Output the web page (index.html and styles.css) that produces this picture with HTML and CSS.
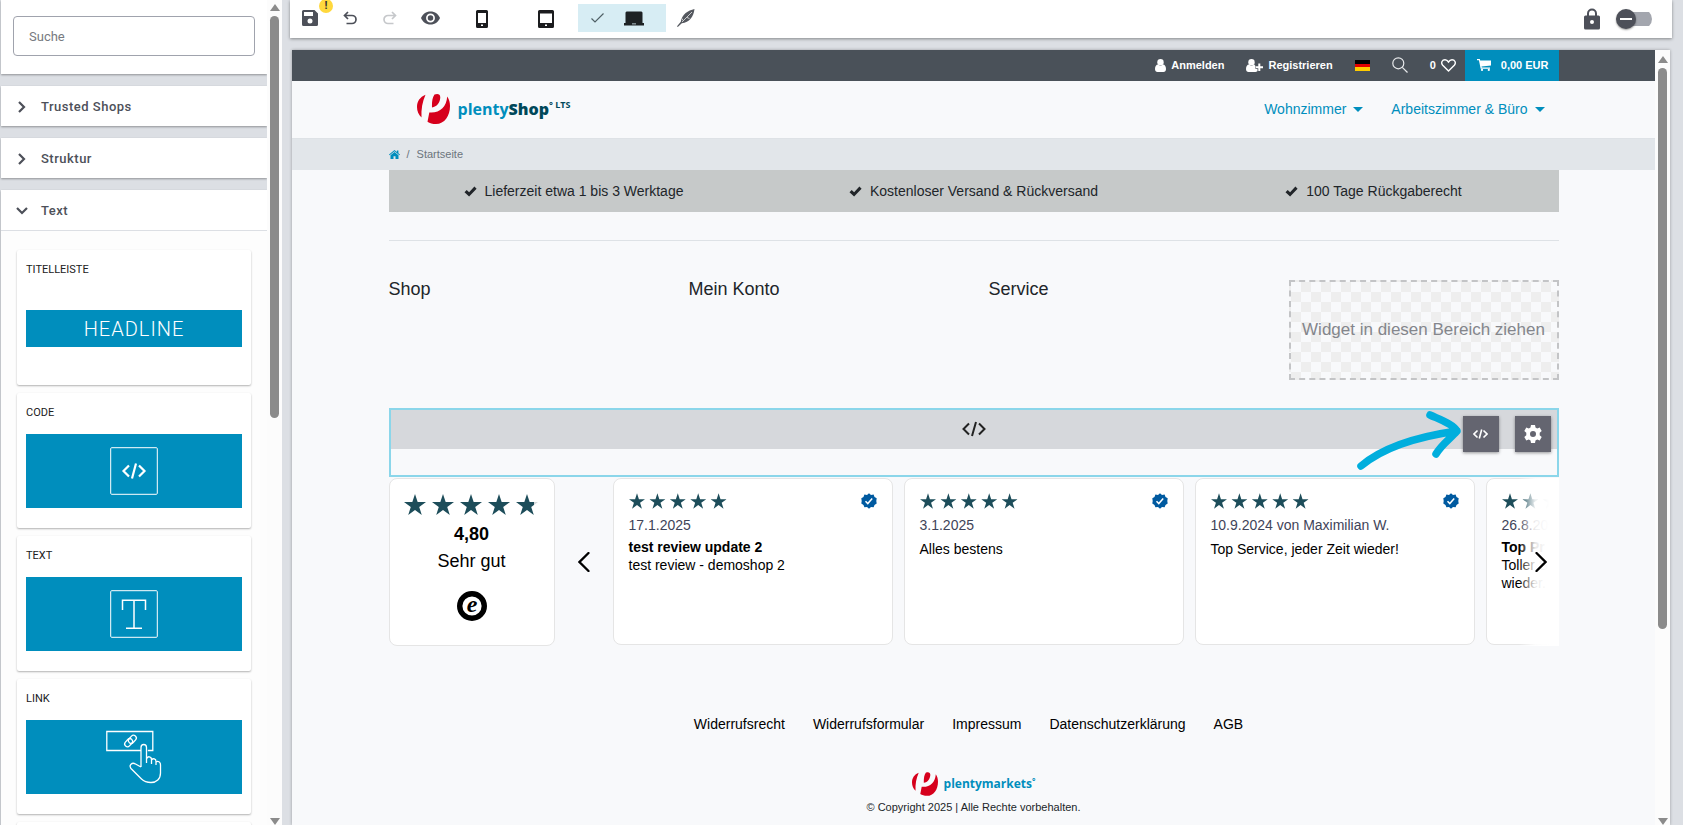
FILE: index.html
```html
<!DOCTYPE html>
<html lang="de">
<head>
<meta charset="utf-8">
<title>plentyShop LTS – ShopBuilder</title>
<link rel="stylesheet" href="styles.css">
</head>
<body>
<svg class="sprite" aria-hidden="true">
  <symbol id="star" viewBox="0 0 24 23"><path d="M12 0l2.900 8.700H24l-7.400 5.400 2.800 8.900-7.400-5.500L4.600 23l2.800-8.900L0 8.700h9.100z"/></symbol>
  <symbol id="tick" viewBox="0 0 13 11"><path fill="#212529" d="M.5 6.200L2.700 4l2.400 2.300L10.400.6l2.200 2.100-7.500 7.900z"/></symbol>
  <symbol id="code" viewBox="0 0 24 16"><path d="M7 2.500L1.500 8 7 13.500M17 2.500L22.500 8 17 13.500M14 1l-4 14" fill="none" stroke="currentColor" stroke-width="2"/></symbol>
  <symbol id="code-small" viewBox="0 0 15 10"><path d="M4.500 1.500L1 5l3.500 3.500M10.500 1.500L14 5l-3.500 3.500M8.700.5l-2.400 9" fill="none" stroke="currentColor" stroke-width="1.600"/></symbol>
  <symbol id="verified" viewBox="0 0 16 16"><path fill="#005aa0" d="M8 .3l2 1.600 2.600-.4.900 2.400 2.200 1.300-.4 2.700.4 2.700-2.200 1.300-.9 2.400-2.600-.3L8 15.700 6 14l-2.600.3-.9-2.400L.3 10.600.7 8 .3 5.200l2.200-1.300.9-2.400 2.600.4z"/><path d="M4.500 8.200l2.300 2.400 4.400-5" fill="none" stroke="#fff" stroke-width="1.500"/></symbol>
  <symbol id="mark" viewBox="0 0 33 30"><g fill="#d6001c"><path d="M8.500.8C3 3 0 7.500 0 13c0 4 1.500 7.500 4.500 10.500C4 15.500 5.500 7.500 8.500.8z"/><path d="M17.500.6c3.500-1.400 6.200-.2 5.700 3.600-.5 4.600-3.200 8.400-8.200 9.300-.2-5 .3-9.900 2.500-12.900z"/><path d="M30.200 2.500C32.200 5.300 33 8.500 33 12c0 10-5.500 18-14 18-3.300 0-6.300-.8-8.500-2.300L12.300 18.500c10.200 1 17.200-5.500 17.900-16z"/></g></symbol>
  <symbol id="right" viewBox="0 0 10 14"><path d="M2 2l5 5-5 5" fill="none" stroke="currentColor" stroke-width="2.200"/></symbol>
</svg>

<div class="app">
  <aside class="sidebar">
    <div class="sidebar-content">
      <div class="panel search-panel"><input class="search" type="text" placeholder="Suche" aria-label="Suche"></div>
      <button class="panel group"><svg class="chev"><use href="#right"/></svg>Trusted Shops</button>
      <button class="panel group"><svg class="chev"><use href="#right"/></svg>Struktur</button>
      <section class="panel open">
        <button class="group"><svg class="chev down"><use href="#right"/></svg>Text</button>
        <div class="widgets">
          <article class="widget"><h3>TITELLEISTE</h3><div class="thumb short">HEADLINE</div></article>
          <article class="widget"><h3>CODE</h3><div class="thumb">
            <svg width="48" height="48" viewBox="0 0 48 48" fill="none" stroke="#fff"><rect x=".7" y=".7" width="46.600" height="46.600" rx="1"/><path stroke-width="2.200" d="M19 18.500L13.500 24l5.500 5.500M29 18.500l5.500 5.500-5.500 5.500M26 16.500l-4 15"/></svg></div></article>
          <article class="widget"><h3>TEXT</h3><div class="thumb">
            <svg width="48" height="48" viewBox="0 0 48 48" fill="none" stroke="#fff"><rect x=".7" y=".7" width="46.600" height="46.600" rx="1"/><path stroke-width="1.500" d="M12.500 20V10.200h23V20M24 10v28M16 38.200h16"/></svg></div></article>
          <article class="widget"><h3>LINK</h3><div class="thumb">
            <svg width="56" height="54" viewBox="0 0 56 54" fill="none" stroke="#fff" stroke-width="1.300"><path d="M35 20.500H.8V1.500h46v19h-5"/><g transform="rotate(-48 24.500 11)"><rect x="17.500" y="8" width="9" height="5.500" rx="2.700"/><rect x="22.500" y="8.500" width="9" height="5.500" rx="2.700"/></g><path d="M35 37V17.500c0-4 5.500-4 5.500 0V33M40.500 29c1-3.500 5-2.500 5 .5V34M45.500 30c1.500-2 4.500-1.500 4.500 1.500V35M50 32c2-1.500 4.500 0 4.500 3v8c0 6-4 9.500-9.500 9.500-4 0-7-1-9.500-3.500L25 38.500c-2.500-3.500 1-6.500 4.500-4.500L35 37"/></svg></div></article>
          <article class="widget"></article>
        </div>
      </section>
    </div>
    <div class="scrollbar" aria-hidden="true"><i class="up"></i><b class="bar-left"></b><i class="dn"></i></div>
  </aside>

  <main class="main">
    <div class="toolbar">
      <button class="tool" aria-label="Speichern">
        <svg width="16" height="16" viewBox="0 0 16 16"><path fill-rule="evenodd" fill="#4d5059" d="M1.500 0H12.500L16 3.500v11a1.500 1.500 0 0 1-1.500 1.500h-13A1.500 1.500 0 0 1 0 14.500v-13A1.500 1.500 0 0 1 1.500 0zM2 2v4h9V2zM8 8.500a2.500 2.500 0 1 0 0 5 2.500 2.500 0 0 0 0-5z"/></svg>
        <span class="alert">!</span></button>
      <button class="tool" aria-label="Rückgängig"><svg width="14" height="14" viewBox="0 0 14 14" fill="none" stroke="#4d5059" stroke-width="1.700"><path d="M5 1L1.500 4.500 5 8M1.500 4.500H9a4 4 0 0 1 0 8H3.500"/></svg></button>
      <button class="tool" aria-label="Wiederholen"><svg width="14" height="14" viewBox="0 0 14 14" fill="none" stroke="#c6c8cb" stroke-width="1.700"><path d="M9 1l3.500 3.500L9 8M12.500 4.500H5a4 4 0 0 0 0 8h5.500"/></svg></button>
      <button class="tool" aria-label="Vorschau"><svg width="19" height="14" viewBox="0 0 19 14"><path fill="#4d5059" d="M9.500.5C5 .5 1.500 3.200 0 7c1.500 3.800 5 6.500 9.500 6.500S17.500 10.800 19 7C17.500 3.200 14 .5 9.500.5z"/><circle cx="9.500" cy="7" r="3.600" fill="none" stroke="#fff" stroke-width="1.700"/></svg></button>
      <button class="tool device" aria-label="Smartphone"><svg width="12" height="18" viewBox="0 0 12 18"><path fill-rule="evenodd" fill="#1b1c1e" d="M1.500 0h9A1.500 1.500 0 0 1 12 1.500v15a1.500 1.500 0 0 1-1.500 1.500h-9A1.500 1.500 0 0 1 0 16.500v-15A1.500 1.500 0 0 1 1.500 0zM2 3v10h8V3zM5 14.500V16h2v-1.500z"/></svg></button>
      <button class="tool device" aria-label="Tablet"><svg width="16" height="18" viewBox="0 0 16 18"><path fill-rule="evenodd" fill="#1b1c1e" d="M1.500 0h13A1.500 1.500 0 0 1 16 1.500v15a1.500 1.500 0 0 1-1.500 1.500h-13A1.500 1.500 0 0 1 0 16.500v-15A1.500 1.500 0 0 1 1.500 0zM2 3.500V13h12V3.500zM7 14.500V16h2v-1.500z"/></svg></button>
      <button class="tool desktop" aria-label="Desktop"><svg width="13" height="10" viewBox="0 0 13 10" fill="none" stroke="#4f6066" stroke-width="1.200"><path d="M.5 5.500l3.500 3.500L12.500.5"/></svg><svg width="20" height="15" viewBox="0 0 20 15" fill="#1d2224"><path d="M2.500.5h15l1 1V12H20v2.500H0V12h1.500V1.500z"/><path d="M8 12.500h4v.8H8z" fill="#d7edf4"/></svg></button>
      <button class="tool" aria-label="Design"><svg width="18" height="18" viewBox="0 0 18 18"><path fill="#55585f" d="M17.500 0C11 1.500 5 5 3.800 12.800L0 17.200l.8.800 4-3.800C12.500 13.500 16.500 8 17.500 0z"/><path d="M5 13L15 3M5 9.500l1 2M12.500 9.500l-2.500-1" stroke="#fff" stroke-width=".7" fill="none"/></svg></button>
      <div class="toolbar-end">
        <svg width="16" height="22" viewBox="0 0 16 22"><path d="M4 9V5.500a4 4 0 0 1 8 0V9" fill="none" stroke="#4d5059" stroke-width="2"/><rect y="7.500" width="16" height="14" rx="1.500" fill="#4d5059"/><circle cx="8" cy="14" r="2" fill="#fff"/></svg>
        <input class="switch" type="checkbox" role="switch" aria-label="Bearbeitung sperren">
      </div>
    </div>

    <div class="preview">
      <div class="shop">
        <div class="topbar"><div class="container">
          <div class="account">
            <a href="#"><svg width="11" height="13" viewBox="0 0 11 13" fill="#fff"><circle cx="5.500" cy="3.300" r="3.200"/><path d="M0 10c0-3 1.500-4.500 2.800-4.500 1.700 1.500 3.700 1.500 5.400 0C9.500 5.500 11 7 11 10c0 2-1 3-2.500 3h-6C1 13 0 12 0 10z"/></svg>Anmelden</a>
            <a href="#"><svg width="17" height="13" viewBox="0 0 17 13" fill="#fff"><circle cx="5.500" cy="3.300" r="3.200"/><path d="M0 10c0-3 1.500-4.500 2.800-4.500C4.500 7 6.500 7 8.200 5.500L9.500 7v3h2v2c-.7.700-1.500 1-3 1h-6C1 13 0 12 0 10zM12.300 4.500h2v2.700H17v2h-2.700V12h-2V9.200H10v-2h2.300z"/></svg>Registrieren</a>
            <button class="flag" aria-label="Sprache: Deutsch"></button>
            <button class="plain" aria-label="Suche"><svg width="16" height="16" viewBox="0 0 16 16" fill="none" stroke="#e8eaec" stroke-width="1.200"><circle cx="6.300" cy="6.300" r="5.500"/><path d="M10.300 10.300L15.500 15.500"/></svg></button>
            <a class="wish" href="#">0<svg width="15" height="13" viewBox="0 0 15 13" fill="none" stroke="#fff" stroke-width="1.400"><path d="M7.500 12L1.700 6.300C-.5 3.500 1.300.8 4 .8c1.500 0 2.600.8 3.500 2.200C8.400 1.600 9.500.8 11 .8c2.700 0 4.500 2.700 2.300 5.500z"/></svg></a>
          </div>
          <a class="cart" href="#"><svg width="14" height="12" viewBox="0 0 14 12" fill="#fff"><path d="M0 0h2.800l.4 1.400H14v5L4.500 7.600l.3.900H13v1.200H3.700L1.900 1.200H0z"/><circle cx="5" cy="10.900" r="1.100"/><circle cx="11.800" cy="10.900" r="1.100"/></svg>0,00 EUR</a>
        </div></div>
        <header class="header"><div class="container">
          <a class="logo" href="#"><svg width="33" height="30"><use href="#mark"/></svg><span>plenty<b>Shop</b><sup>° LTS</sup></span></a>
          <nav class="nav"><a href="#">Wohnzimmer</a><a href="#">Arbeitszimmer &amp; Büro</a></nav>
        </div></header>
        <div class="crumbs"><div class="container"><a href="#" aria-label="Startseite"><svg width="11" height="9" viewBox="0 0 11 9" fill="#008ebd"><path d="M5.500 0L0 4.500l.6.700 4.900-4 4.900 4 .6-.7-1.600-1.300V.5H7.900V2z"/><path d="M5.500 2L1.500 5.300V9h3V6.300h2V9h3V5.300z"/></svg></a><span>/</span><span>Startseite</span></div></div>

        <div class="container body">
          <ul class="usps">
            <li><svg width="13" height="11"><use href="#tick"/></svg>Lieferzeit etwa 1 bis 3 Werktage</li>
            <li><svg width="13" height="11"><use href="#tick"/></svg>Kostenloser Versand &amp; Rückversand</li>
            <li><svg width="13" height="11"><use href="#tick"/></svg>100 Tage Rückgaberecht</li>
          </ul>
          <hr>
          <div class="columns"><h2>Shop</h2><h2>Mein Konto</h2><h2>Service</h2><div class="dropzone">Widget in diesen Bereich ziehen</div></div>

          <div class="code-widget">
            <div class="code-head"><svg width="24" height="16"><use href="#code"/></svg></div>
            <div class="actions">
              <button aria-label="Code bearbeiten"><svg width="15" height="10"><use href="#code-small"/></svg></button>
              <button aria-label="Einstellungen"><svg width="18" height="18" viewBox="0 0 18 18"><path fill="#fff" fill-rule="evenodd" d="M7 0h4l.5 2.500 1.700 1L15.700 2.600l2 3.500-2 1.700v2.400l2 1.700-2 3.500-2.500-.9-1.700 1L11 18H7l-.5-2.500-1.700-1-2.500.9-2-3.500 2-1.700V7.800l-2-1.700 2-3.500 2.500.9 1.700-1zM9 6a3 3 0 1 0 0 6 3 3 0 0 0 0-6z"/></svg></button>
            </div>
            <svg class="hint" width="106" height="62" viewBox="0 0 106 62" fill="none" stroke="#00aedd" stroke-width="7.500" stroke-linecap="round" stroke-linejoin="round"><path d="M4 57C24 40 58 28 100 22M73 6c11 5 23 9 27 16-7 8-15 13-21 23"/></svg>
          </div>

          <div class="reviews">
            <div class="rating">
              <svg width="136" height="24" fill="#1d4d5a"><defs><linearGradient id="part"><stop offset=".8" stop-color="#1d4d5a"/><stop offset=".8" stop-color="#d5d9db"/></linearGradient></defs><use href="#star" x="0" width="22" height="23"/><use href="#star" x="28" width="22" height="23"/><use href="#star" x="56" width="22" height="23"/><use href="#star" x="84" width="22" height="23"/><use href="#star" x="112" width="22" height="23" fill="url(#part)"/></svg>
              <strong>4,80</strong><span>Sehr gut</span>
              <svg class="seal" width="30" height="30" viewBox="0 0 30 30"><circle cx="15" cy="15" r="12.300" fill="#fff" stroke="#000" stroke-width="5.400"/><text x="15" y="21" text-anchor="middle">e</text></svg>
            </div>
            <button class="prev" aria-label="Zurück"><svg width="12" height="20" viewBox="0 0 12 20" fill="none" stroke="#000" stroke-width="2.300" stroke-linecap="round"><path d="M10.500 1L1.500 10l9 9"/></svg></button>
            <div class="carousel">
              <article class="review"><div class="stars"></div><time>17.1.2025</time><h4>test review update 2</h4><p>test review - demoshop 2</p></article>
              <article class="review"><div class="stars"></div><time>3.1.2025</time><p class="lone">Alles bestens</p></article>
              <article class="review"><div class="stars"></div><time>10.9.2024 von Maximilian W.</time><p class="lone">Top Service, jeder Zeit wieder!</p></article>
              <article class="review"><div class="stars"></div><time>26.8.20</time><h4>Top Pr</h4><p>Toller S<br>wieder.</p></article>
              <button class="next" aria-label="Weiter"><svg width="12" height="20" viewBox="0 0 12 20" fill="none" stroke="#000" stroke-width="2.300" stroke-linecap="round"><path d="M1.500 1l9 9-9 9"/></svg></button>
            </div>
          </div>

          <nav class="legal"><a href="#">Widerrufsrecht</a><a href="#">Widerrufsformular</a><a href="#">Impressum</a><a href="#">Datenschutzerklärung</a><a href="#">AGB</a></nav>
          <footer class="foot">
            <a class="brand" href="#"><svg width="26" height="24"><use href="#mark"/></svg><span>plentymarkets<sup>°</sup></span></a>
            <small>© Copyright 2025 | Alle Rechte vorbehalten.</small>
          </footer>
        </div>
      </div>
      <div class="scrollbar" aria-hidden="true"><i class="up"></i><b class="bar-right"></b><i class="dn"></i></div>
    </div>
  </main>
</div>
<script src="app.js"></script>
</body>
</html>
```
FILE: styles.css
```css
* { box-sizing: border-box; }
body, h2, h3, h4, p, ul { margin: 0; padding: 0; }
body { background: #dcdfe4; font-family: "Liberation Sans", Arial, sans-serif; font-size: 14px; color: #212529; }
a { color: inherit; text-decoration: none; }
button { border: 0; padding: 0; background: none; font: inherit; color: inherit; cursor: pointer; }
svg { display: block; flex: none; }
.sprite { position: absolute; width: 0; height: 0; }

.app { display: flex; height: 100vh; overflow: hidden; }

.sidebar { display: flex; flex: none; width: 282px; padding-left: 1px; overflow: hidden; font-family: Roboto, sans-serif; }
.sidebar-content { display: flex; flex: 1; flex-direction: column; gap: 12px; }
.panel { flex: none; background: #fff; box-shadow: 0 1px 2px rgba(0, 0, 0, .35); }
.search-panel { padding: 16px 12px 18px; }
.search { display: block; width: 100%; height: 40px; padding: 0 15px; border: 1px solid #a0a3ad; border-radius: 4px; background: #fff; font: 13px Roboto, sans-serif; color: #4d5059; }
.search::placeholder { color: #777a80; opacity: 1; }
.group { display: flex; align-items: center; gap: 12px; width: 100%; height: 40px; padding: 1px 14px 0; font-size: 13px; font-weight: 500; letter-spacing: .5px; color: #4d5059; text-align: left; }
.chev { width: 14px; height: 14px; }
.chev.down { transform: rotate(90deg); }
.open > .group { border-bottom: 1px solid #dcdfe4; height: 41px; }
.widgets { display: grid; gap: 8px; padding: 19px 16px; background: #fdfdfd; }
.widget { height: 135px; padding: 13px 9px; background: #fff; border-radius: 2px; box-shadow: 0 1px 2px rgba(0, 0, 0, .3); }
.widget h3 { font-size: 11px; font-weight: 400; line-height: 14px; color: #212121; }
.thumb { display: flex; align-items: center; justify-content: center; height: 74px; margin-top: 14px; background: #008ebd; color: #fff; }
.thumb.short { height: 37px; margin-top: 33px; font-size: 20px; font-weight: 300; letter-spacing: 1px; }

.scrollbar { display: flex; flex: none; flex-direction: column; align-items: center; width: 15px; padding-top: 4px; background: #fcfcfc; }
.scrollbar i { border: 5px solid transparent; border-top-width: 0; }
.scrollbar .up { border-bottom: 7px solid #8b8b8b; }
.scrollbar .dn { margin-top: auto; border-bottom-width: 0; border-top: 7px solid #8b8b8b; }
.scrollbar b { width: 9px; margin-top: 5px; border-radius: 5px; background: #8b8b8b; }
.bar-left { height: 49%; }
.bar-right { height: 73%; }
.preview .scrollbar { padding-top: 6px; }

.main { display: flex; flex: 1; flex-direction: column; gap: 12px; min-width: 0; padding: 0 11px 0 8px; }
.toolbar { display: flex; flex: none; height: 38px; padding-right: 20px; background: #fff; box-shadow: 0 1px 3px rgba(0, 0, 0, .4); }
.tool { position: relative; display: flex; align-items: center; justify-content: center; width: 40px; height: 36px; }
.alert { position: absolute; top: -1px; right: -3px; width: 14px; height: 14px; border-radius: 50%; background: #ffd83d; font: 700 11px/14px Roboto, sans-serif; color: #333; }
.device { width: 64px; padding-top: 2px; }
.desktop { gap: 20px; width: 88px; height: 28px; margin-top: 4px; padding-right: 9px; background: #d7edf4; }
.toolbar-end { display: flex; align-items: center; gap: 16px; margin-left: auto; }
.switch { position: relative; appearance: none; width: 36px; height: 20px; margin: 0; background: linear-gradient(#a3a6ae, #a3a6ae) 100% 50% / 28px 14px no-repeat; border-radius: 10px; }
.switch::before { content: ""; display: block; width: 20px; height: 20px; border-radius: 50%; background: linear-gradient(#fff, #fff) center / 12px 2px no-repeat #4d5059; box-shadow: 0 1px 2px rgba(0, 0, 0, .4); }

.preview { display: flex; flex: 1; min-height: 0; margin: 0 2px; box-shadow: 0 0 3px rgba(0, 0, 0, .3); }
.shop { flex: 1; min-width: 0; overflow: hidden; background: #f8f9fb; }
.container { width: 100%; max-width: 1170px; margin: 0 auto; }

.topbar { background: #4a5159; color: #fff; font-size: 11px; font-weight: 700; }
.topbar .container { display: flex; justify-content: flex-end; height: 31px; }
.account { display: flex; align-items: center; gap: 22px; margin-right: 9px; padding-bottom: 1px; }
.account a { display: flex; align-items: center; gap: 5px; }
.flag { width: 15px; height: 11px; background: linear-gradient(#000 0 33%, #e00000 33% 67%, #ffcb00 67%); }
.cart { display: flex; align-items: center; gap: 10px; padding: 0 10px 1px 12px; background: #008ebd; }

.header { border-bottom: 1px solid #dee2e6; }
.header .container { display: flex; align-items: center; justify-content: space-between; height: 57px; padding: 0 14px 1px 28px; }
.logo, .brand { display: flex; align-items: center; gap: 8px; font-family: "Open Sans", sans-serif; font-weight: 700; color: #008ebd; }
.logo { font-size: 16px; line-height: 20px; }
.logo b, .logo sup { color: #00485a; }
.logo sup { font-size: 9px; line-height: 9px; vertical-align: 7px; }
.nav { display: flex; gap: 28px; color: #008ebd; }
.nav a { display: flex; align-items: center; gap: 7px; }
.nav a::after { content: ""; border: 5px solid transparent; border-top-color: #008ebd; border-bottom: 0; }
.crumbs { background: #e2e6ea; color: #6c757d; font-size: 11px; }
.crumbs .container { display: flex; align-items: center; gap: 7px; height: 31px; padding-bottom: 1px; }

.usps { display: grid; grid-template-columns: repeat(3, 1fr); gap: 30px; height: 42px; background: #c6c9c9; list-style: none; }
.usps li { display: flex; align-items: center; justify-content: center; gap: 8px; }
hr { margin: 28px 0 39px; border: 0; border-top: 1px solid #dee2e6; }
.columns { display: grid; grid-template-columns: repeat(4, 1fr); gap: 30px; }
.columns h2 { font-size: 18px; font-weight: 400; line-height: 18px; }
.dropzone { display: flex; align-items: center; justify-content: center; height: 100px; border: 2px dashed #c3c4c6; background: repeating-conic-gradient(#eee 0 25%, #f8f9fb 0 50%) 0 0 / 20px 20px; font-size: 17px; color: #84868c; white-space: nowrap; }

.code-widget { position: relative; height: 69px; margin-top: 28px; border: 2px solid #8bd6ea; }
.code-head { display: flex; align-items: center; justify-content: center; height: 39px; padding-bottom: 2px; background: #d6d8dc; color: #222; }
.actions { position: absolute; top: 6px; right: 6px; display: flex; gap: 16px; }
.actions button { display: flex; align-items: center; justify-content: center; width: 36px; height: 36px; background: #646570; color: #fff; box-shadow: 0 1px 3px rgba(0, 0, 0, .4); }
.hint { position: absolute; top: -1px; right: 94px; }

.reviews { display: flex; height: 168px; margin-top: 1px; color: #000; }
.rating { display: flex; flex: none; flex-direction: column; align-items: center; width: 166px; padding-top: 14px; border: 1px solid #e5e5e5; border-radius: 8px; background: #fff; font-size: 18px; line-height: 27px; }
.rating strong { margin-top: 4px; }
.seal { margin-top: 16px; }
.seal text { font: italic 700 24px "Liberation Serif", serif; }
.prev { display: flex; align-items: center; justify-content: center; width: 58px; }
.carousel { position: relative; display: flex; flex: 1; gap: 11px; min-width: 0; overflow: hidden; }
.carousel::after { content: ""; position: absolute; inset: 0 0 0 auto; width: 40px; background: linear-gradient(90deg, transparent, rgba(255, 255, 255, .9) 40%, #fff 75%); }
.review { position: relative; flex: none; width: 280px; height: 167px; padding: 14px; padding-left: 15px; border: 1px solid #e5e5e5; border-radius: 8px; background: #fff; line-height: 18px; }
.stars { display: flex; justify-content: space-between; }
.stars .verified { margin-right: 1px; }
.review time { display: block; margin-top: 6px; color: #3f4459; }
.review h4 { margin-top: 4px; font-size: 14px; }
.review .lone { margin-top: 6px; }
.next { position: absolute; z-index: 1; top: 74px; right: 12px; }

.legal { display: flex; justify-content: center; gap: 28px; margin-top: 70px; padding-right: 10px; line-height: 16px; color: #000; }
.foot { display: flex; flex-direction: column; align-items: center; gap: 5px; margin-top: 40px; }
.brand { gap: 6px; font-size: 12px; line-height: 16px; }
.brand sup { font-size: 8px; line-height: 8px; vertical-align: 4px; }
.foot small { font-size: 11px; line-height: 12px; }
```
FILE: app.js
```js
// Fill every review's rating row with five stars and the verified badge.
const row = [0, 1, 2, 3, 4]
  .map(i => `<use href="#star" x="${i * 20.4}" width="16" height="16"/>`)
  .join('');
document.querySelectorAll('.stars').forEach(el => {
  el.innerHTML = `<svg width="98" height="17" fill="#1d4d5a">${row}</svg>` +
    '<svg class="verified" width="16" height="16"><use href="#verified"/></svg>';
});
```
